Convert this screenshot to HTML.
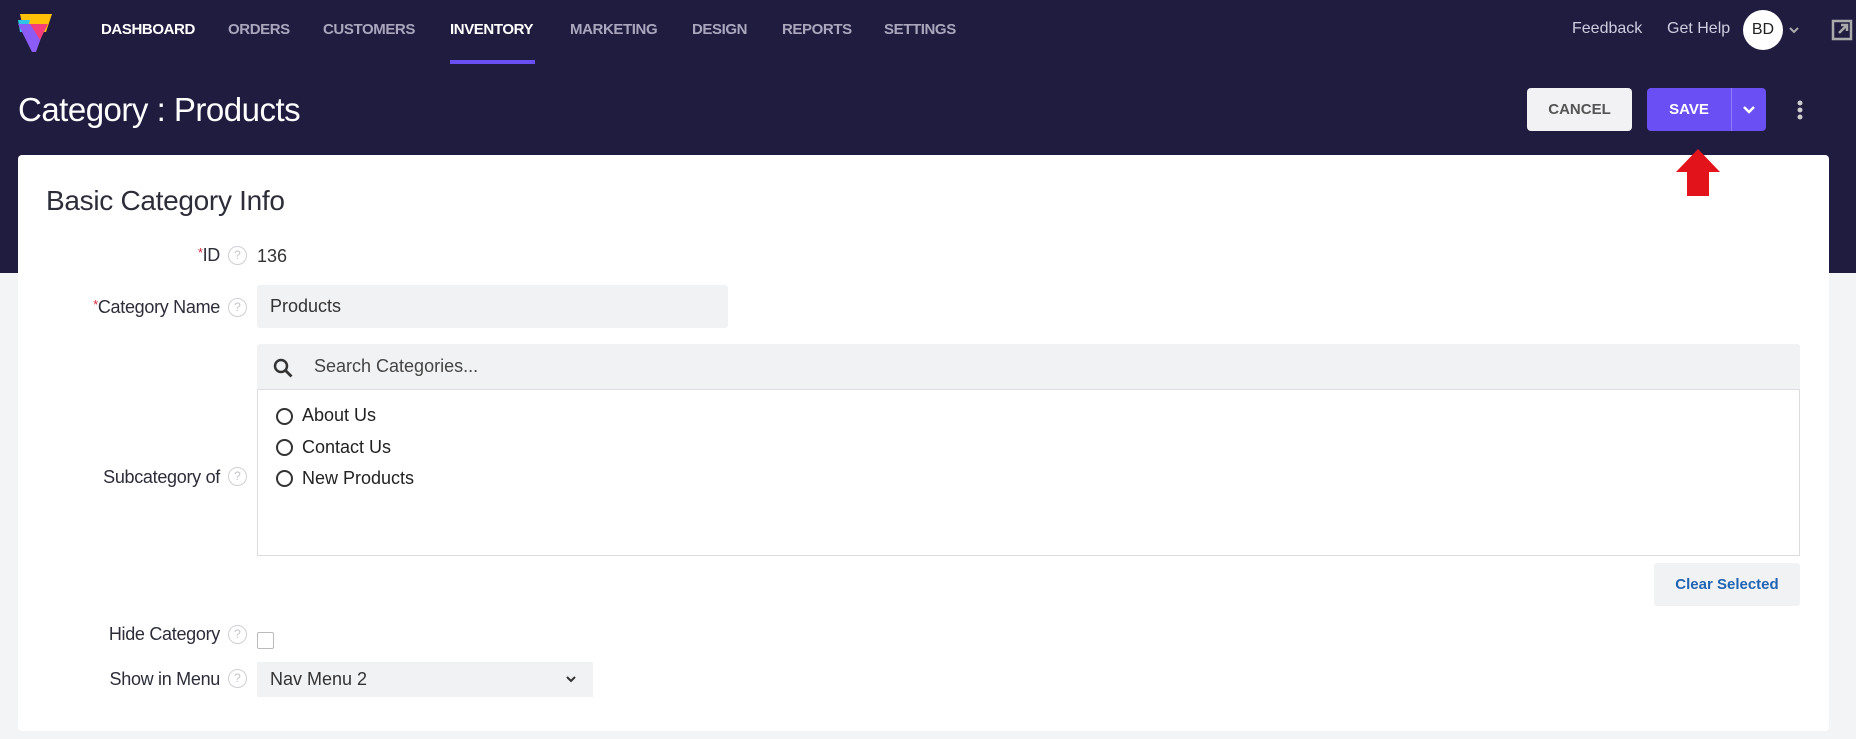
<!DOCTYPE html>
<html><head><meta charset="utf-8"><style>
*{box-sizing:border-box;margin:0;padding:0}
body{width:1856px;height:739px;overflow:hidden;background:#f3f4f6;font-family:"Liberation Sans",sans-serif;position:relative}
.hdr{position:absolute;left:0;top:0;width:1856px;height:273px;background:#201c3f}
.a{position:absolute;white-space:nowrap}
.nav{top:21px;font-size:15px;font-weight:bold;color:#a9a6bd;letter-spacing:-0.4px}
.card{position:absolute;left:18px;top:155px;width:1811px;height:576px;background:#fff;border-radius:4px}
.lbl{font-size:18px;color:#2d2d3a;text-align:right;width:200px;letter-spacing:-0.3px}
.req{color:#d9263b;font-size:13px;vertical-align:top}
.q{width:19px;height:19px;border:1.5px solid #cfcfd6;border-radius:50%;color:#c5c5cc;font-size:12px;text-align:center;line-height:16px}
.radio{width:17px;height:17px;border:2px solid #333;border-radius:50%}
.rt{font-size:18px;color:#222}
</style></head><body>
<div class="hdr"></div>
<svg class="a" style="left:16px;top:12px" width="40" height="42" viewBox="0 0 40 42">
<polygon points="4,2 36,2 30,20 8,20" fill="#ffc107"/>
<polygon points="2,8 14,8 10,20 4,20" fill="#2ec4e8"/>
<polygon points="2,12 30,12 20,40 16,40" fill="#8b5cf6"/>
<polygon points="14,12 32,12 24,28" fill="#f43f7a"/>
</svg>
<div class="a nav" style="left:101px;color:#fff">DASHBOARD</div>
<div class="a nav" style="left:228px">ORDERS</div>
<div class="a nav" style="left:323px">CUSTOMERS</div>
<div class="a nav" style="left:450px;color:#fff">INVENTORY</div>
<div class="a nav" style="left:570px">MARKETING</div>
<div class="a nav" style="left:692px">DESIGN</div>
<div class="a nav" style="left:782px">REPORTS</div>
<div class="a nav" style="left:884px">SETTINGS</div>
<div class="a" style="left:450px;top:60px;width:85px;height:4px;background:#6a4ff5"></div>
<div class="a" style="left:1572px;top:20px;font-size:16px;color:#cfcde0">Feedback</div>
<div class="a" style="left:1667px;top:20px;font-size:16px;color:#cfcde0">Get Help</div>
<div class="a" style="left:1743px;top:10px;width:40px;height:40px;border-radius:50%;background:#fff;color:#222;font-size:16px;text-align:center;line-height:40px">BD</div>
<svg class="a" style="left:1788px;top:26px" width="12" height="8"><path d="M2 2l4 4 4-4" stroke="#aaa" stroke-width="2" fill="none"/></svg>
<svg class="a" style="left:1831px;top:19px" width="22" height="22" viewBox="0 0 22 22"><rect x="2" y="2" width="18" height="18" stroke="#aaa" stroke-width="2.5" fill="none"/><path d="M8 14l8-8M10 6h6v6" stroke="#aaa" stroke-width="2.5" fill="none"/></svg>
<div class="a" style="left:18px;top:91px;font-size:33px;color:#fff;letter-spacing:-0.5px">Category : Products</div>
<div class="a" style="left:1527px;top:88px;width:105px;height:43px;background:#f2f2f4;border-radius:4px;color:#555;font-weight:bold;font-size:15px;text-align:center;line-height:43px">CANCEL</div>
<div class="a" style="left:1647px;top:88px;width:119px;height:43px;background:#6a4ff5;border-radius:4px"></div>
<div class="a" style="left:1647px;top:88px;width:84px;height:43px;color:#fff;font-weight:bold;font-size:15px;text-align:center;line-height:43px">SAVE</div>
<div class="a" style="left:1731px;top:88px;width:1px;height:43px;background:#8f7bff"></div>
<svg class="a" style="left:1742px;top:105px" width="14" height="10"><path d="M2 2l5 5 5-5" stroke="#fff" stroke-width="2.5" fill="none"/></svg>
<svg class="a" style="left:1796px;top:100px" width="8" height="22"><circle cx="4" cy="3" r="2.5" fill="#ccc"/><circle cx="4" cy="10" r="2.5" fill="#ccc"/><circle cx="4" cy="17" r="2.5" fill="#ccc"/></svg>
<div class="card"></div>
<svg class="a" style="left:1674px;top:148px" width="48" height="49" viewBox="0 0 48 49"><polygon points="24,1 46,24 35,24 35,48 13,48 13,24 2,24" fill="#e3131b"/></svg>
<div class="a" style="left:46px;top:185px;font-size:28px;color:#2d2d3a;letter-spacing:-0.3px">Basic Category Info</div>
<div class="a lbl" style="left:20px;top:245px"><span class="req">*</span>ID</div>
<div class="a q" style="left:228px;top:246px">?</div>
<div class="a" style="left:257px;top:246px;font-size:18px;color:#333">136</div>
<div class="a lbl" style="left:20px;top:297px"><span class="req">*</span>Category Name</div>
<div class="a q" style="left:228px;top:298px">?</div>
<div class="a" style="left:257px;top:285px;width:471px;height:43px;background:#f1f2f4;border-radius:3px;font-size:18px;color:#333;padding:11px 13px">Products</div>
<div class="a" style="left:257px;top:344px;width:1543px;height:45px;background:#f1f2f4;border-radius:3px 3px 0 0"></div>
<svg class="a" style="left:272px;top:357px" width="22" height="22" viewBox="0 0 22 22"><circle cx="9" cy="9" r="6" stroke="#333" stroke-width="2.5" fill="none"/><path d="M13.5 13.5l6 6" stroke="#333" stroke-width="2.8"/></svg>
<div class="a" style="left:314px;top:356px;font-size:18px;color:#444">Search Categories...</div>
<div class="a" style="left:257px;top:389px;width:1543px;height:167px;border:1px solid #dcdde2"></div>
<div class="a radio" style="left:276px;top:408px"></div><div class="a rt" style="left:302px;top:405px">About Us</div>
<div class="a radio" style="left:276px;top:439px"></div><div class="a rt" style="left:302px;top:437px">Contact Us</div>
<div class="a radio" style="left:276px;top:470px"></div><div class="a rt" style="left:302px;top:468px">New Products</div>
<div class="a lbl" style="left:20px;top:467px">Subcategory of</div>
<div class="a q" style="left:228px;top:467px">?</div>
<div class="a" style="left:1654px;top:563px;width:146px;height:43px;background:#f1f2f4;border-radius:3px;color:#2264b4;font-weight:bold;font-size:15px;text-align:center;line-height:43px">Clear Selected</div>
<div class="a lbl" style="left:20px;top:624px">Hide Category</div>
<div class="a q" style="left:228px;top:625px">?</div>
<div class="a" style="left:257px;top:632px;width:17px;height:17px;border:1.5px solid #bbb;border-radius:2px"></div>
<div class="a lbl" style="left:20px;top:669px">Show in Menu</div>
<div class="a q" style="left:228px;top:669px">?</div>
<div class="a" style="left:257px;top:662px;width:336px;height:35px;background:#f1f2f4;font-size:18px;color:#333;padding:7px 13px">Nav Menu 2</div>
<svg class="a" style="left:565px;top:675px" width="12" height="8"><path d="M2 2l4 4 4-4" stroke="#333" stroke-width="2" fill="none"/></svg>
</body></html>
